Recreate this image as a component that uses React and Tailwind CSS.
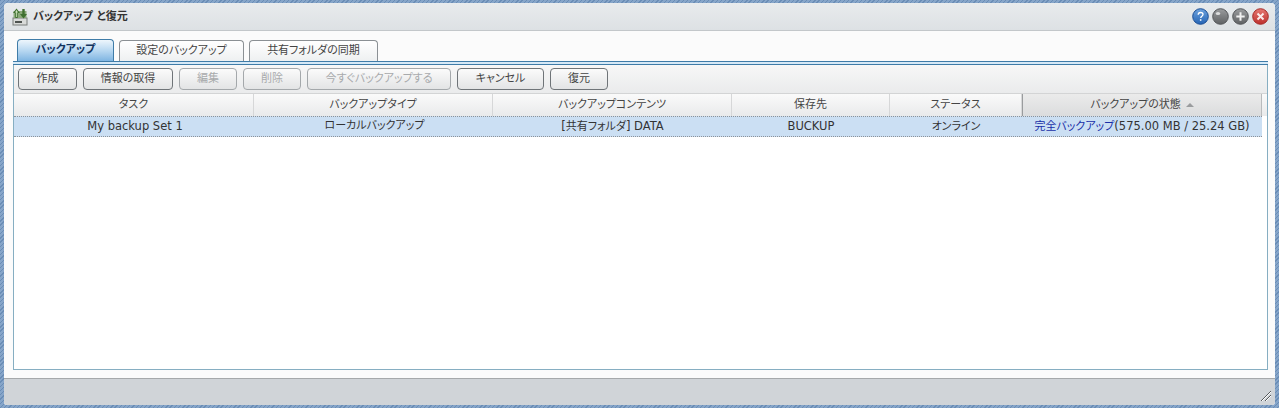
const FONT = "font-['DejaVu_Sans','Noto_Sans_CJK_JP',sans-serif] [font-feature-settings:'palt']";

const tabs = [
  { label: 'バックアップ', width: 'w-[97px]', active: true },
  { label: '設定のバックアップ', width: 'w-[125px]' },
  { label: '共有フォルダの同期', width: 'w-[129px]' },
];

const buttons = [
  { label: '作成', width: 'w-[59px]' },
  { label: '情報の取得', width: 'w-[90px]' },
  { label: '編集', width: 'w-[58px]', disabled: true },
  { label: '削除', width: 'w-[58px]', disabled: true },
  { label: '今すぐバックアップする', width: 'w-[144px]', disabled: true },
  { label: 'キャンセル', width: 'w-[87px]' },
  { label: '復元', width: 'w-[58px]' },
];

const columns = [
  { label: 'タスク', width: 'w-[240px]' },
  { label: 'バックアップタイプ', width: 'w-[239px]' },
  { label: 'バックアップコンテンツ', width: 'w-[239px]' },
  { label: '保存先', width: 'w-[158px]' },
  { label: 'ステータス', width: 'w-[132px]' },
  { label: 'バックアップの状態', width: 'w-[240px]', sorted: true },
];

const Ball = ({ id, from, to, edge, children }) => (
  <svg width="17" height="17" viewBox="0 0 17 17">
    <defs>
      <linearGradient id={id} x1="0" y1="0" x2="0" y2="1">
        <stop offset="0" stopColor={from} />
        <stop offset="1" stopColor={to} />
      </linearGradient>
    </defs>
    <circle cx="8.5" cy="8.5" r="7.8" fill={`url(#${id})`} stroke={edge} />
    {children}
  </svg>
);

const HelpIcon = () => (
  <Ball id="help" from="#6ea3de" to="#2463b4" edge="#1d4f94">
    <path d="M6.200 6.800c0-1.400 1-2.300 2.400-2.300s2.400.9 2.400 2.100c0 1.600-2.300 1.700-2.300 3.400" fill="none" stroke="#fff" strokeWidth="1.300" />
    <rect x="7.900" y="11.200" width="1.500" height="1.600" fill="#fff" />
  </Ball>
);

const MinIcon = () => (
  <Ball id="min" from="#9a9c9e" to="#5f6163" edge="#55575a">
    <ellipse cx="6" cy="5.500" rx="2.200" ry="1.500" fill="#dcdddd" />
  </Ball>
);

const MaxIcon = () => (
  <Ball id="max" from="#9a9c9e" to="#5f6163" edge="#55575a">
    <path d="M8.500 4.300v8.400M4.300 8.500h8.400" stroke="#f0f0f0" strokeWidth="2" />
  </Ball>
);

const CloseIcon = () => (
  <Ball id="close" from="#e57872" to="#bd2f2b" edge="#a52c2a">
    <path d="M5.500 5.500l6 6M11.500 5.500l-6 6" stroke="#fbeaea" strokeWidth="2" />
  </Ball>
);

const AppIcon = () => (
  <svg width="16" height="18" viewBox="0 0 16 18">
    <rect x="1" y="10" width="14" height="7" fill="#d9dbd9" stroke="#7b7f7c" />
    <rect x="3" y="13" width="7" height="2" fill="#4e5350" />
    <rect x="1.500" y="3" width="13" height="7" fill="#8aa97a" />
    <path d="M4.500 0.500L1 5h2.300v5h2.400V5H8zM11.500 10.500l3.500-4.500h-2.300V1h-2.400v5H8z" fill="#3f7030" />
    <path d="M4.500 2L3 4.500h1.200V9h.8V4.500H6z" fill="#cfe6bd" />
  </svg>
);

const Resize = () => (
  <svg width="12" height="12" viewBox="0 0 12 12" className="absolute right-[3px] bottom-[3px]">
    <path d="M1 11L11 1M5 11l6-6" stroke="#55595c" strokeWidth="1" />
    <path d="M2 11L11 2M6 11l5-5" stroke="#ffffff" strokeWidth="1" />
  </svg>
);

export default function App() {
  return (
    <div className={`${FONT} w-[1279px] h-[408px] overflow-hidden pt-[3px] px-[4px] text-[11.5px] text-[#333] bg-[#6d90b8] bg-[repeating-linear-gradient(135deg,#6a8db6_0px,#6a8db6_1px,#86a5c9_1px,#86a5c9_3px)]`}>
      <div className="w-[1271px] h-[402px] flex flex-col rounded-t-[4px] rounded-b-[3px] overflow-hidden bg-white">
        {/* Title bar */}
        <header className="h-[28px] shrink-0 flex items-center justify-between pl-[8px] pr-[6px] bg-gradient-to-b from-[#e8ebed] to-[#dde1e4] border-b border-[#c3c7ca]">
          <div className="flex items-center gap-[5px]">
            <AppIcon />
            <span className="text-[11px] font-bold text-[#333] mt-[1px]">バックアップ と復元</span>
          </div>
          <div className="flex items-center gap-[3px]">
            <HelpIcon />
            <MinIcon />
            <MaxIcon />
            <CloseIcon />
          </div>
        </header>

        {/* Main */}
        <main className="flex-1 min-h-0 flex flex-col bg-[#fbfbfb] pt-[9px] pl-[9px] pr-[7px] pb-[8px]">
          <div className="h-[21px] shrink-0 flex items-end gap-[5px] pl-[4px]">
            {tabs.map((t) => (
              <div
                key={t.label}
                className={`${t.width} flex items-center justify-center rounded-t-[4px] border border-b-0 text-[11px] ${
                  t.active
                    ? 'h-[22px] font-bold text-[#12335f] border-[#3f7ca8] bg-gradient-to-b from-[#eef6fc] via-[#b8d8f1] to-[#7fb5e2]'
                    : 'h-[21px] text-[#444] border-[#8b9094] bg-gradient-to-b from-white to-[#eef0f1]'
                }`}
              >
                {t.label}
              </div>
            ))}
          </div>

          <div className="flex-1 min-h-0 flex flex-col border border-[#86aec2] border-t-0">
            <div className="h-[4px] shrink-0 -mx-px border-y border-[#3f7ca8] bg-[#d6e9f7]" />

            {/* Toolbar */}
            <div className="h-[28px] shrink-0 flex items-center gap-[6px] pl-[4px] bg-gradient-to-b from-[#f7f7f7] to-[#eaebec]">
              {buttons.map((b) => (
                <div
                  key={b.label}
                  className={`${b.width} h-[22px] flex items-center justify-center rounded-[4px] border text-[11px] bg-gradient-to-b from-[#fbfbfb] to-[#e3e4e5] ${
                    b.disabled ? 'border-[#a4a8ab] text-[#a8aaac]' : 'border-[#6f7478] text-[#444]'
                  }`}
                >
                  {b.label}
                </div>
              ))}
            </div>

            {/* Grid header */}
            <div className="h-[23px] shrink-0 flex border-t border-[#d3d4d5] bg-gradient-to-b from-[#fafafa] to-[#e9eaeb]">
              {columns.map((c) => (
                <div
                  key={c.label}
                  className={`${c.width} flex items-center justify-center gap-[5px] border-r text-[11px] text-[#444] ${
                    c.sorted ? 'border-l border-l-[#9a9c9e] border-r-[#b9bbbd] bg-gradient-to-b from-[#ebebeb] to-[#dbdcdd]' : 'border-[#d6d7d8]'
                  }`}
                >
                  {c.label}
                  {c.sorted && <span className="w-0 h-0 border-x-[4px] border-x-transparent border-b-[4px] border-b-[#9a9c9e]" />}
                </div>
              ))}
            </div>

            {/* Grid row */}
            <div className="flex-1 min-h-0 bg-white">
              <div className="w-[1248px] h-[21px] flex items-center pt-[1px] bg-[#cbdff3] border-y border-dotted border-[#8d9298] text-[#333]">
                <div className="w-[242px] text-center">My backup Set 1</div>
                <div className="w-[237px] text-center text-[11px] -translate-y-px">ローカルバックアップ</div>
                <div className="w-[239px] text-center">[<span className="text-[11px]">共有フォルダ</span>] DATA</div>
                <div className="w-[158px] text-center">BUCKUP</div>
                <div className="w-[132px] text-center text-[11px]">オンライン</div>
                <div className="w-[240px] text-center whitespace-nowrap">
                  <span className="text-[11px] text-[#1a2fa8]">完全バックアップ</span>(575.00 MB / 25.24 GB)
                </div>
              </div>
            </div>
          </div>
        </main>

        {/* Footer */}
        <footer className="relative h-[27px] shrink-0 bg-[#d0d4d8] border-t border-[#a6a9ab]">
          <Resize />
        </footer>
      </div>
    </div>
  );
}
